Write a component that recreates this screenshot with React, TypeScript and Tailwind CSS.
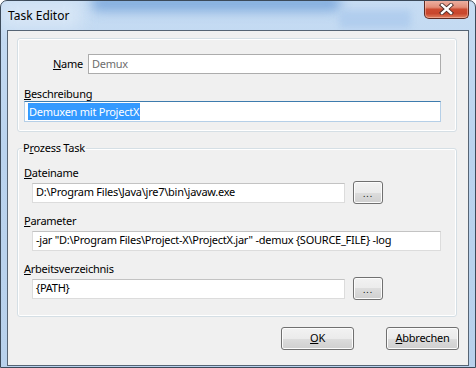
import React from 'react';

const font = "font-['Noto_Sans',sans-serif]";

function Key({ children }: { children: React.ReactNode }) {
  return <span className="underline underline-offset-[1px] decoration-[1px]">{children}</span>;
}

function Field({
  children,
  className = '',
  muted = false,
}: {
  children?: React.ReactNode;
  className?: string;
  muted?: boolean;
}) {
  return (
    <div
      className={`h-[20px] flex items-center pl-[3px] bg-white border text-[11px] whitespace-nowrap overflow-hidden ${
        muted ? 'text-[#6d6d6d]' : 'text-black'
      } ${className}`}
    >
      {children}
    </div>
  );
}

function Button({ children, className = '' }: { children: React.ReactNode; className?: string }) {
  return (
    <div
      className={`h-[23px] flex items-center justify-center rounded-[3px] border border-[#707070] shadow-[inset_0_0_0_1px_#fcfcfc] bg-[linear-gradient(to_bottom,#f2f2f2_0%,#ebebeb_50%,#dddddd_50%,#cfcfcf_100%)] text-black ${className}`}
    >
      {children}
    </div>
  );
}

function CloseButton() {
  return (
    <div className="w-[45px] h-[19px] -mt-px rounded-b-[5px] border border-[#5e2a22] border-t-0 shadow-[inset_0_0_0_1px_rgba(255,210,200,0.45)] bg-[linear-gradient(to_bottom,#eeb4a6_0%,#e38e79_40%,#cd4b31_52%,#c8462d_75%,#e0805f_100%)] flex items-center justify-center">
      <svg width="15" height="12" viewBox="0 0 15 12">
        <path d="M3 2 L12 10 M12 2 L3 10" stroke="#4a2a26" strokeWidth="4.2" strokeLinecap="square" />
        <path d="M3 2 L12 10 M12 2 L3 10" stroke="#ffffff" strokeWidth="2.4" strokeLinecap="square" />
      </svg>
    </div>
  );
}

const plain = 'border-[#dcdcdc] border-t-[#c3c3c3]';

export default function App() {
  return (
    <div
      className={`${font} w-[476px] h-[368px] relative overflow-hidden flex flex-col rounded-t-[7px] border border-[#3c4a5a] bg-[linear-gradient(to_bottom,#c6dcf3_0%,#bad3ee_40%,#b8d1ec_100%)]`}
    >
      {/* blurred glass reflections */}
      <div className="absolute left-[90px] top-[-6px] w-[250px] h-[16px] rounded-full bg-[#6f9fd8] blur-[6px] opacity-80" />
      <div className="absolute left-[0px] top-[0px] w-[80px] h-[28px] bg-[#dce9f7] blur-[8px] opacity-80" />
      <div className="absolute left-[338px] top-[9px] w-[72px] h-[18px] rounded-[3px] bg-[#a9c8ec] blur-[3px] opacity-70" />

      {/* title bar */}
      <div className="relative h-[29px] flex items-start pl-[7px] pr-[6px]">
        <span className="mt-[7px] text-[12px] leading-[16px] text-black">Task Editor</span>
        <div className="ml-auto">
          <CloseButton />
        </div>
      </div>

      {/* client area */}
      <div className="relative mx-[6px] mb-px flex-1 flex flex-col border border-[#566474] bg-[#f0f0f0] text-[11px] tracking-[-0.25px] text-black">
        {/* general group */}
        <div className="mt-[7px] ml-[9px] mr-[11px] rounded-[3px] border border-[#d5dfe5] shadow-[inset_0_0_0_1px_#ffffff] pl-[6px] pr-[15px] pt-[15px] pb-[9px]">
          <div className="flex items-center">
            <div className="w-[59px] text-right leading-[16px]">
              <Key>N</Key>ame
            </div>
            <Field muted className="ml-[5px] flex-1 border-[#acacac]">
              Demux
            </Field>
          </div>
          <div className="mt-[12px] h-[15px] leading-[15px]">
            <Key>B</Key>eschreibung
          </div>
          <Field className="h-[21px] pl-[2px] border-[#b5cfe7] border-t-[#3d7bad]">
            <span className="bg-[#3399ff] text-white leading-[17px] px-px">Demuxen mit ProjectX</span>
          </Field>
        </div>

        {/* process group */}
        <fieldset className="mt-[8px] ml-[9px] mr-[11px] rounded-[3px] border border-[#d5dfe5] shadow-[inset_0_0_0_1px_#ffffff] pl-[6px] pr-[15px] pb-[16px]">
          <legend className="-ml-[2px] px-[1px] leading-[16px]">
            P<Key>r</Key>ozess Task
          </legend>
          <div className="mt-[9px] h-[16px] leading-[16px]">
            <Key>D</Key>ateiname
          </div>
          <div className="h-[23px] flex items-center gap-[8px] pl-[8px]">
            <Field className={`w-[313px] ${plain}`}>D:\Program Files\Java\jre7\bin\javaw.exe</Field>
            <Button className="w-[30px] text-[9px] tracking-[1px] pt-[2px]">...</Button>
          </div>
          <div className="mt-[9px] h-[16px] leading-[16px]">
            <Key>P</Key>arameter
          </div>
          <div className="h-[23px] flex items-center pl-[8px]">
            <Field className={`flex-1 ${plain}`}>
              -jar "D:\Program Files\Project-X\ProjectX.jar" -demux {'{SOURCE_FILE}'} -log
            </Field>
          </div>
          <div className="mt-[9px] h-[16px] leading-[16px]">
            <Key>A</Key>rbeitsverzeichnis
          </div>
          <div className="h-[23px] flex items-center gap-[8px] pl-[8px]">
            <Field className={`w-[313px] ${plain}`}>{'{PATH}'}</Field>
            <Button className="w-[30px] text-[9px] tracking-[1px] pt-[2px]">...</Button>
          </div>
        </fieldset>

        {/* dialog buttons */}
        <div className="mt-[10px] flex justify-end gap-[32px] pr-[9px]">
          <Button className="w-[73px]">
            <Key>O</Key>K
          </Button>
          <Button className="w-[73px]">
            <Key>A</Key>bbrechen
          </Button>
        </div>
      </div>
    </div>
  );
}
